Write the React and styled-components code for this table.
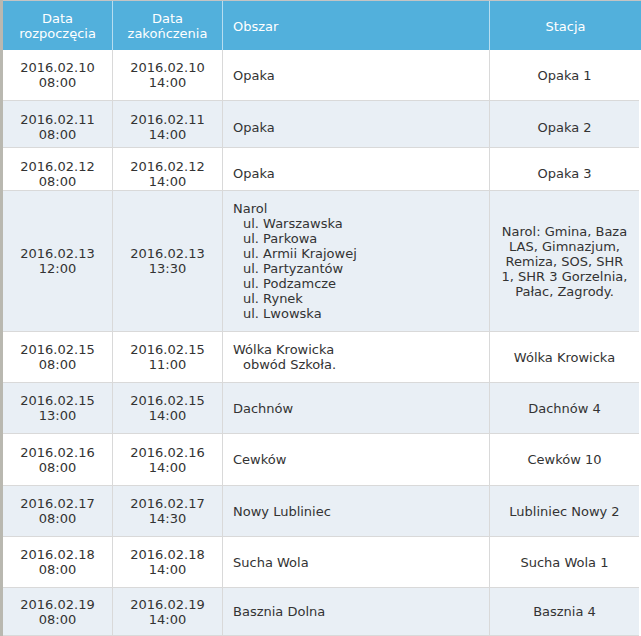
import React from 'react';
import styled, { createGlobalStyle } from 'styled-components';

const GlobalStyle = createGlobalStyle`
  html, body {
    margin: 0;
    padding: 0;
    background: #FFFFFF;
  }

  body {
    font-family: 'DejaVu Sans', Verdana, sans-serif;
    font-size: 13px;
    color: #333333;
  }
`;

const Page = styled.div`
  width: 641px;
  height: 636px;
  overflow: hidden;
  border-left: 3px solid #B9B8B0;
  box-sizing: border-box;
`;

const HeaderRow = styled.div`
  display: grid;
  grid-template-columns: 110px 110px 267px 1fr;
  height: 50px;
  box-sizing: border-box;
  border-top: 1px solid #C4C4C4;
  background-color: #52B0DC;
  color: #FFFFFF;
`;

const HeadCell = styled.div`
  display: flex;
  align-items: center;
  justify-content: ${(p) => (p.left ? 'flex-start' : 'center')};
  padding: ${(p) => (p.left ? '1px 10px 0' : '1px 6px 0')};
  border-right: ${(p) => (p.last ? 'none' : '1px solid #B6DDF0')};
  text-align: ${(p) => (p.left ? 'left' : 'center')};
  line-height: 15px;
  box-sizing: border-box;
`;

const Row = styled.div`
  display: grid;
  grid-template-columns: 110px 110px 267px 149px;
  width: 636px;
  height: ${(p) => p.h}px;
  box-sizing: border-box;
  background-color: ${(p) => (p.odd ? '#E9EFF5' : '#FFFFFF')};
`;

const Cell = styled.div`
  display: flex;
  align-items: center;
  justify-content: ${(p) => (p.left ? 'flex-start' : 'center')};
  padding: ${(p) => p.top || 0}px ${(p) => (p.left ? 10 : 8)}px 0;
  text-align: ${(p) => (p.left ? 'left' : 'center')};
  line-height: 15px;
  border-bottom: 1px solid #D9D9D9;
  border-right: ${(p) => (p.last ? 'none' : '1px solid #D9D9D9')};
  box-sizing: border-box;
`;

const Lines = styled.div`
  display: flex;
  flex-direction: column;
`;

const Sub = styled.span`
  padding-left: 10px;
`;

const rows = [
  { h: 51, start: ['2016.02.10', '08:00'], end: ['2016.02.10', '14:00'], area: ['Opaka'], station: ['Opaka 1'] },
  { h: 47, top: 6, start: ['2016.02.11', '08:00'], end: ['2016.02.11', '14:00'], area: ['Opaka'], station: ['Opaka 2'] },
  { h: 43, top: 9, start: ['2016.02.12', '08:00'], end: ['2016.02.12', '14:00'], area: ['Opaka'], station: ['Opaka 3'] },
  {
    h: 141,
    start: ['2016.02.13', '12:00'],
    end: ['2016.02.13', '13:30'],
    area: ['Narol', 'ul. Warszawska', 'ul. Parkowa', 'ul. Armii Krajowej', 'ul. Partyzantów', 'ul. Podzamcze', 'ul. Rynek', 'ul. Lwowska'],
    station: ['Narol: Gmina, Baza', 'LAS, Gimnazjum,', 'Remiza, SOS, SHR', '1, SHR 3 Gorzelnia,', 'Pałac, Zagrody.'],
  },
  { h: 51, start: ['2016.02.15', '08:00'], end: ['2016.02.15', '11:00'], area: ['Wólka Krowicka', 'obwód Szkoła.'], station: ['Wólka Krowicka'] },
  { h: 51, start: ['2016.02.15', '13:00'], end: ['2016.02.15', '14:00'], area: ['Dachnów'], station: ['Dachnów 4'] },
  { h: 52, start: ['2016.02.16', '08:00'], end: ['2016.02.16', '14:00'], area: ['Cewków'], station: ['Cewków 10'] },
  { h: 51, start: ['2016.02.17', '08:00'], end: ['2016.02.17', '14:30'], area: ['Nowy Lubliniec'], station: ['Lubliniec Nowy 2'] },
  { h: 51, start: ['2016.02.18', '08:00'], end: ['2016.02.18', '14:00'], area: ['Sucha Wola'], station: ['Sucha Wola 1'] },
  { h: 48, start: ['2016.02.19', '08:00'], end: ['2016.02.19', '14:00'], area: ['Basznia Dolna'], station: ['Basznia 4'] },
];

const Stacked = ({ lines }) => (
  <Lines>
    {lines.map((l) => (
      <span key={l}>{l}</span>
    ))}
  </Lines>
);

const Area = ({ lines }) => (
  <Lines>
    {lines.map((l, i) => (i === 0 ? <span key={l}>{l}</span> : <Sub key={l}>{l}</Sub>))}
  </Lines>
);

const App = () => (
  <>
    <GlobalStyle />
    <Page>
      <HeaderRow>
        <HeadCell>Data<br />rozpoczęcia</HeadCell>
        <HeadCell>Data<br />zakończenia</HeadCell>
        <HeadCell left>Obszar</HeadCell>
        <HeadCell last>Stacja</HeadCell>
      </HeaderRow>
      {rows.map((r, i) => (
        <Row key={i} h={r.h} odd={i % 2 === 1}>
          <Cell top={r.top}><Stacked lines={r.start} /></Cell>
          <Cell top={r.top}><Stacked lines={r.end} /></Cell>
          <Cell top={r.top} left><Area lines={r.area} /></Cell>
          <Cell top={r.top} last><Stacked lines={r.station} /></Cell>
        </Row>
      ))}
    </Page>
  </>
);

export default App;
